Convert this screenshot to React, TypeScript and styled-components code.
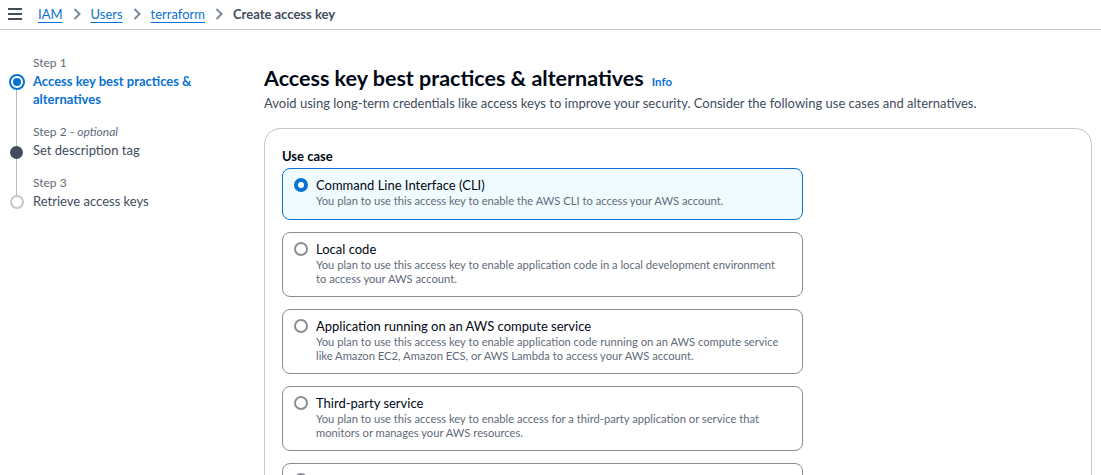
import React from "react";
import styled, { createGlobalStyle } from "styled-components";

const Global = createGlobalStyle`
  html, body { margin: 0; padding: 0; background: #ffffff; overflow: hidden; }
  body { font-family: Lato, "Open Sans", Arial, sans-serif; color: #000716; }
  * { box-sizing: border-box; }
`;

const Page = styled.div`
  width: 1101px;
  height: 475px;
  display: flex;
  flex-direction: column;
  overflow: hidden;
`;

const TopBar = styled.header`
  height: 30px;
  flex: none;
  display: flex;
  align-items: center;
  padding: 0 0 1px 8px;
  border-bottom: 1px solid #c6c6cd;
  gap: 16px;
`;

const Crumbs = styled.nav`
  display: flex;
  align-items: center;
  font-size: 13px;
  line-height: 18px;
`;

const CrumbLink = styled.a`
  color: #0972d3;
  text-decoration: underline;
  text-underline-offset: 3px;
  text-decoration-thickness: 1px;
`;

const CrumbCurrent = styled.span`
  color: #414d5c;
  font-weight: 700;
`;

const Sep = styled.span`
  display: inline-flex;
  width: 28px;
  justify-content: center;
  color: #7d8998;
`;

const Body = styled.div`
  flex: 1;
  display: grid;
  grid-template-columns: 264px 1fr;
`;

const Steps = styled.ol`
  list-style: none;
  margin: 0;
  padding: 25px 0 0 8px;
`;

const StepRow = styled.li`
  display: flex;
  align-items: stretch;
  gap: 8px;
`;

const Rail = styled.div`
  width: 17px;
  flex: none;
  display: flex;
  flex-direction: column;
  align-items: center;
`;

const Segment = styled.div<{ $h?: number; $show: boolean; $grow?: boolean }>`
  width: 1px;
  height: ${(p) => (p.$h ? `${p.$h}px` : "auto")};
  flex: ${(p) => (p.$grow ? "1" : "none")};
  background: ${(p) => (p.$show ? "#b6bec9" : "transparent")};
`;

const ActiveIcon = styled.span`
  width: 16px;
  height: 16px;
  flex: none;
  border-radius: 50%;
  border: 2px solid #0972d3;
  display: flex;
  align-items: center;
  justify-content: center;
  &::before {
    content: "";
    width: 8px;
    height: 8px;
    border-radius: 50%;
    background: #0972d3;
  }
`;

const FilledIcon = styled.span`
  width: 13px;
  height: 13px;
  flex: none;
  border-radius: 50%;
  background: #414d5c;
`;

const HollowIcon = styled.span`
  width: 14px;
  height: 14px;
  flex: none;
  border-radius: 50%;
  border: 2px solid #c6c6cd;
`;

const StepText = styled.div<{ $last?: boolean }>`
  padding-bottom: ${(p) => (p.$last ? "0" : "16px")};
`;

const StepLabel = styled.div`
  font-size: 12px;
  line-height: 16px;
  color: #5f6b7a;
  margin-bottom: 1px;
  em { font-style: italic; }
`;

const StepTitle = styled.div<{ $active?: boolean }>`
  font-size: 13px;
  line-height: 18px;
  color: ${(p) => (p.$active ? "#0972d3" : "#414d5c")};
  font-weight: ${(p) => (p.$active ? 700 : 400)};
  width: 175px;
`;

const Main = styled.main`
  padding: 63px 9px 0 0;
  min-width: 0;
`;

const HeadRow = styled.div`
  display: flex;
  align-items: baseline;
  gap: 8px;
  margin-top: -30px;
`;

const H1 = styled.h1`
  margin: 0;
  font-size: 21.5px;
  line-height: 30px;
  font-weight: 700;
  color: #000716;
`;

const Info = styled.a`
  font-size: 11.5px;
  font-weight: 700;
  color: #0972d3;
`;

const Lead = styled.p`
  margin: 0;
  font-size: 13px;
  line-height: 20px;
  color: #414d5c;
`;

const Panel = styled.section`
  margin-top: 15px;
  border: 1px solid #c6c6cd;
  border-radius: 16px;
  padding: 18px 17px 20px;
`;

const FieldLabel = styled.div`
  font-size: 13px;
  line-height: 18px;
  font-weight: 700;
  color: #000716;
  margin-bottom: 3px;
`;

const Tiles = styled.div`
  width: 521px;
  display: flex;
  flex-direction: column;
  gap: 12px;
`;

const Tile = styled.label<{ $checked?: boolean }>`
  display: flex;
  gap: 8px;
  min-height: 52px;
  padding: 7px 12px 10px 11px;
  border-radius: 8px;
  border: 1px solid ${(p) => (p.$checked ? "#0972d3" : "#8c8c94")};
  background: ${(p) => (p.$checked ? "#f0fbff" : "#ffffff")};
`;

const Radio = styled.span<{ $checked?: boolean }>`
  width: 14px;
  height: 14px;
  flex: none;
  margin-top: 2px;
  border-radius: 50%;
  border: ${(p) => (p.$checked ? "4px solid #0972d3" : "2px solid #8c8c94")};
  background: #ffffff;
`;

const TileText = styled.div`
  display: flex;
  flex-direction: column;
  white-space: nowrap;
`;

const TileTitle = styled.span`
  font-size: 13px;
  line-height: 18px;
  color: #000716;
`;

const TileDesc = styled.span`
  font-size: 11.2px;
  line-height: 14px;
  color: #5f6b7a;
`;

const Hamburger = () => (
  <svg width="14" height="12" viewBox="0 0 14 12" aria-hidden>
    <rect x="0" y="0" width="14" height="2" fill="#414d5c" />
    <rect x="0" y="5" width="14" height="2" fill="#414d5c" />
    <rect x="0" y="10" width="14" height="2" fill="#414d5c" />
  </svg>
);

const Chevron = () => (
  <Sep>
    <svg width="8" height="12" viewBox="0 0 8 12" aria-hidden>
      <path d="M1.5 1 L6.5 6 L1.5 11" fill="none" stroke="#7d8998" strokeWidth="2" />
    </svg>
  </Sep>
);

const useCases = [
  {
    title: "Command Line Interface (CLI)",
    desc: ["You plan to use this access key to enable the AWS CLI to access your AWS account."],
    checked: true,
  },
  {
    title: "Local code",
    desc: [
      "You plan to use this access key to enable application code in a local development environment",
      "to access your AWS account.",
    ],
  },
  {
    title: "Application running on an AWS compute service",
    desc: [
      "You plan to use this access key to enable application code running on an AWS compute service",
      "like Amazon EC2, Amazon ECS, or AWS Lambda to access your AWS account.",
    ],
  },
  {
    title: "Third-party service",
    desc: [
      "You plan to use this access key to enable access for a third-party application or service that",
      "monitors or manages your AWS resources.",
    ],
  },
  {
    title: "Application running outside AWS",
    desc: [
      "You plan to use this access key to authenticate workloads running in your data center or other",
      "infrastructure outside of AWS that needs to access your AWS resources.",
    ],
  },
];

export default function App() {
  return (
    <Page>
      <Global />
      <TopBar>
        <Hamburger />
        <Crumbs>
          <CrumbLink>IAM</CrumbLink>
          <Chevron />
          <CrumbLink>Users</CrumbLink>
          <Chevron />
          <CrumbLink>terraform</CrumbLink>
          <Chevron />
          <CrumbCurrent>Create access key</CrumbCurrent>
        </Crumbs>
      </TopBar>
      <Body>
        <Steps>
          <StepRow>
            <Rail>
              <Segment $h={19} $show={false} />
              <ActiveIcon />
              <Segment $show $grow />
            </Rail>
            <StepText>
              <StepLabel>Step 1</StepLabel>
              <StepTitle $active>Access key best practices &amp; alternatives</StepTitle>
            </StepText>
          </StepRow>
          <StepRow>
            <Rail>
              <Segment $h={22} $show />
              <FilledIcon />
              <Segment $show $grow />
            </Rail>
            <StepText>
              <StepLabel>
                Step 2 - <em>optional</em>
              </StepLabel>
              <StepTitle>Set description tag</StepTitle>
            </StepText>
          </StepRow>
          <StepRow>
            <Rail>
              <Segment $h={20} $show />
              <HollowIcon />
            </Rail>
            <StepText $last>
              <StepLabel>Step 3</StepLabel>
              <StepTitle>Retrieve access keys</StepTitle>
            </StepText>
          </StepRow>
        </Steps>
        <Main>
          <HeadRow>
            <H1>Access key best practices &amp; alternatives</H1>
            <Info>Info</Info>
          </HeadRow>
          <Lead>
            Avoid using long-term credentials like access keys to improve your security. Consider the following use
            cases and alternatives.
          </Lead>
          <Panel>
            <FieldLabel>Use case</FieldLabel>
            <Tiles>
              {useCases.map((u) => (
                <Tile key={u.title} $checked={u.checked}>
                  <Radio $checked={u.checked} />
                  <TileText>
                    <TileTitle>{u.title}</TileTitle>
                    {u.desc.map((d) => (
                      <TileDesc key={d}>{d}</TileDesc>
                    ))}
                  </TileText>
                </Tile>
              ))}
            </Tiles>
          </Panel>
        </Main>
      </Body>
    </Page>
  );
}
